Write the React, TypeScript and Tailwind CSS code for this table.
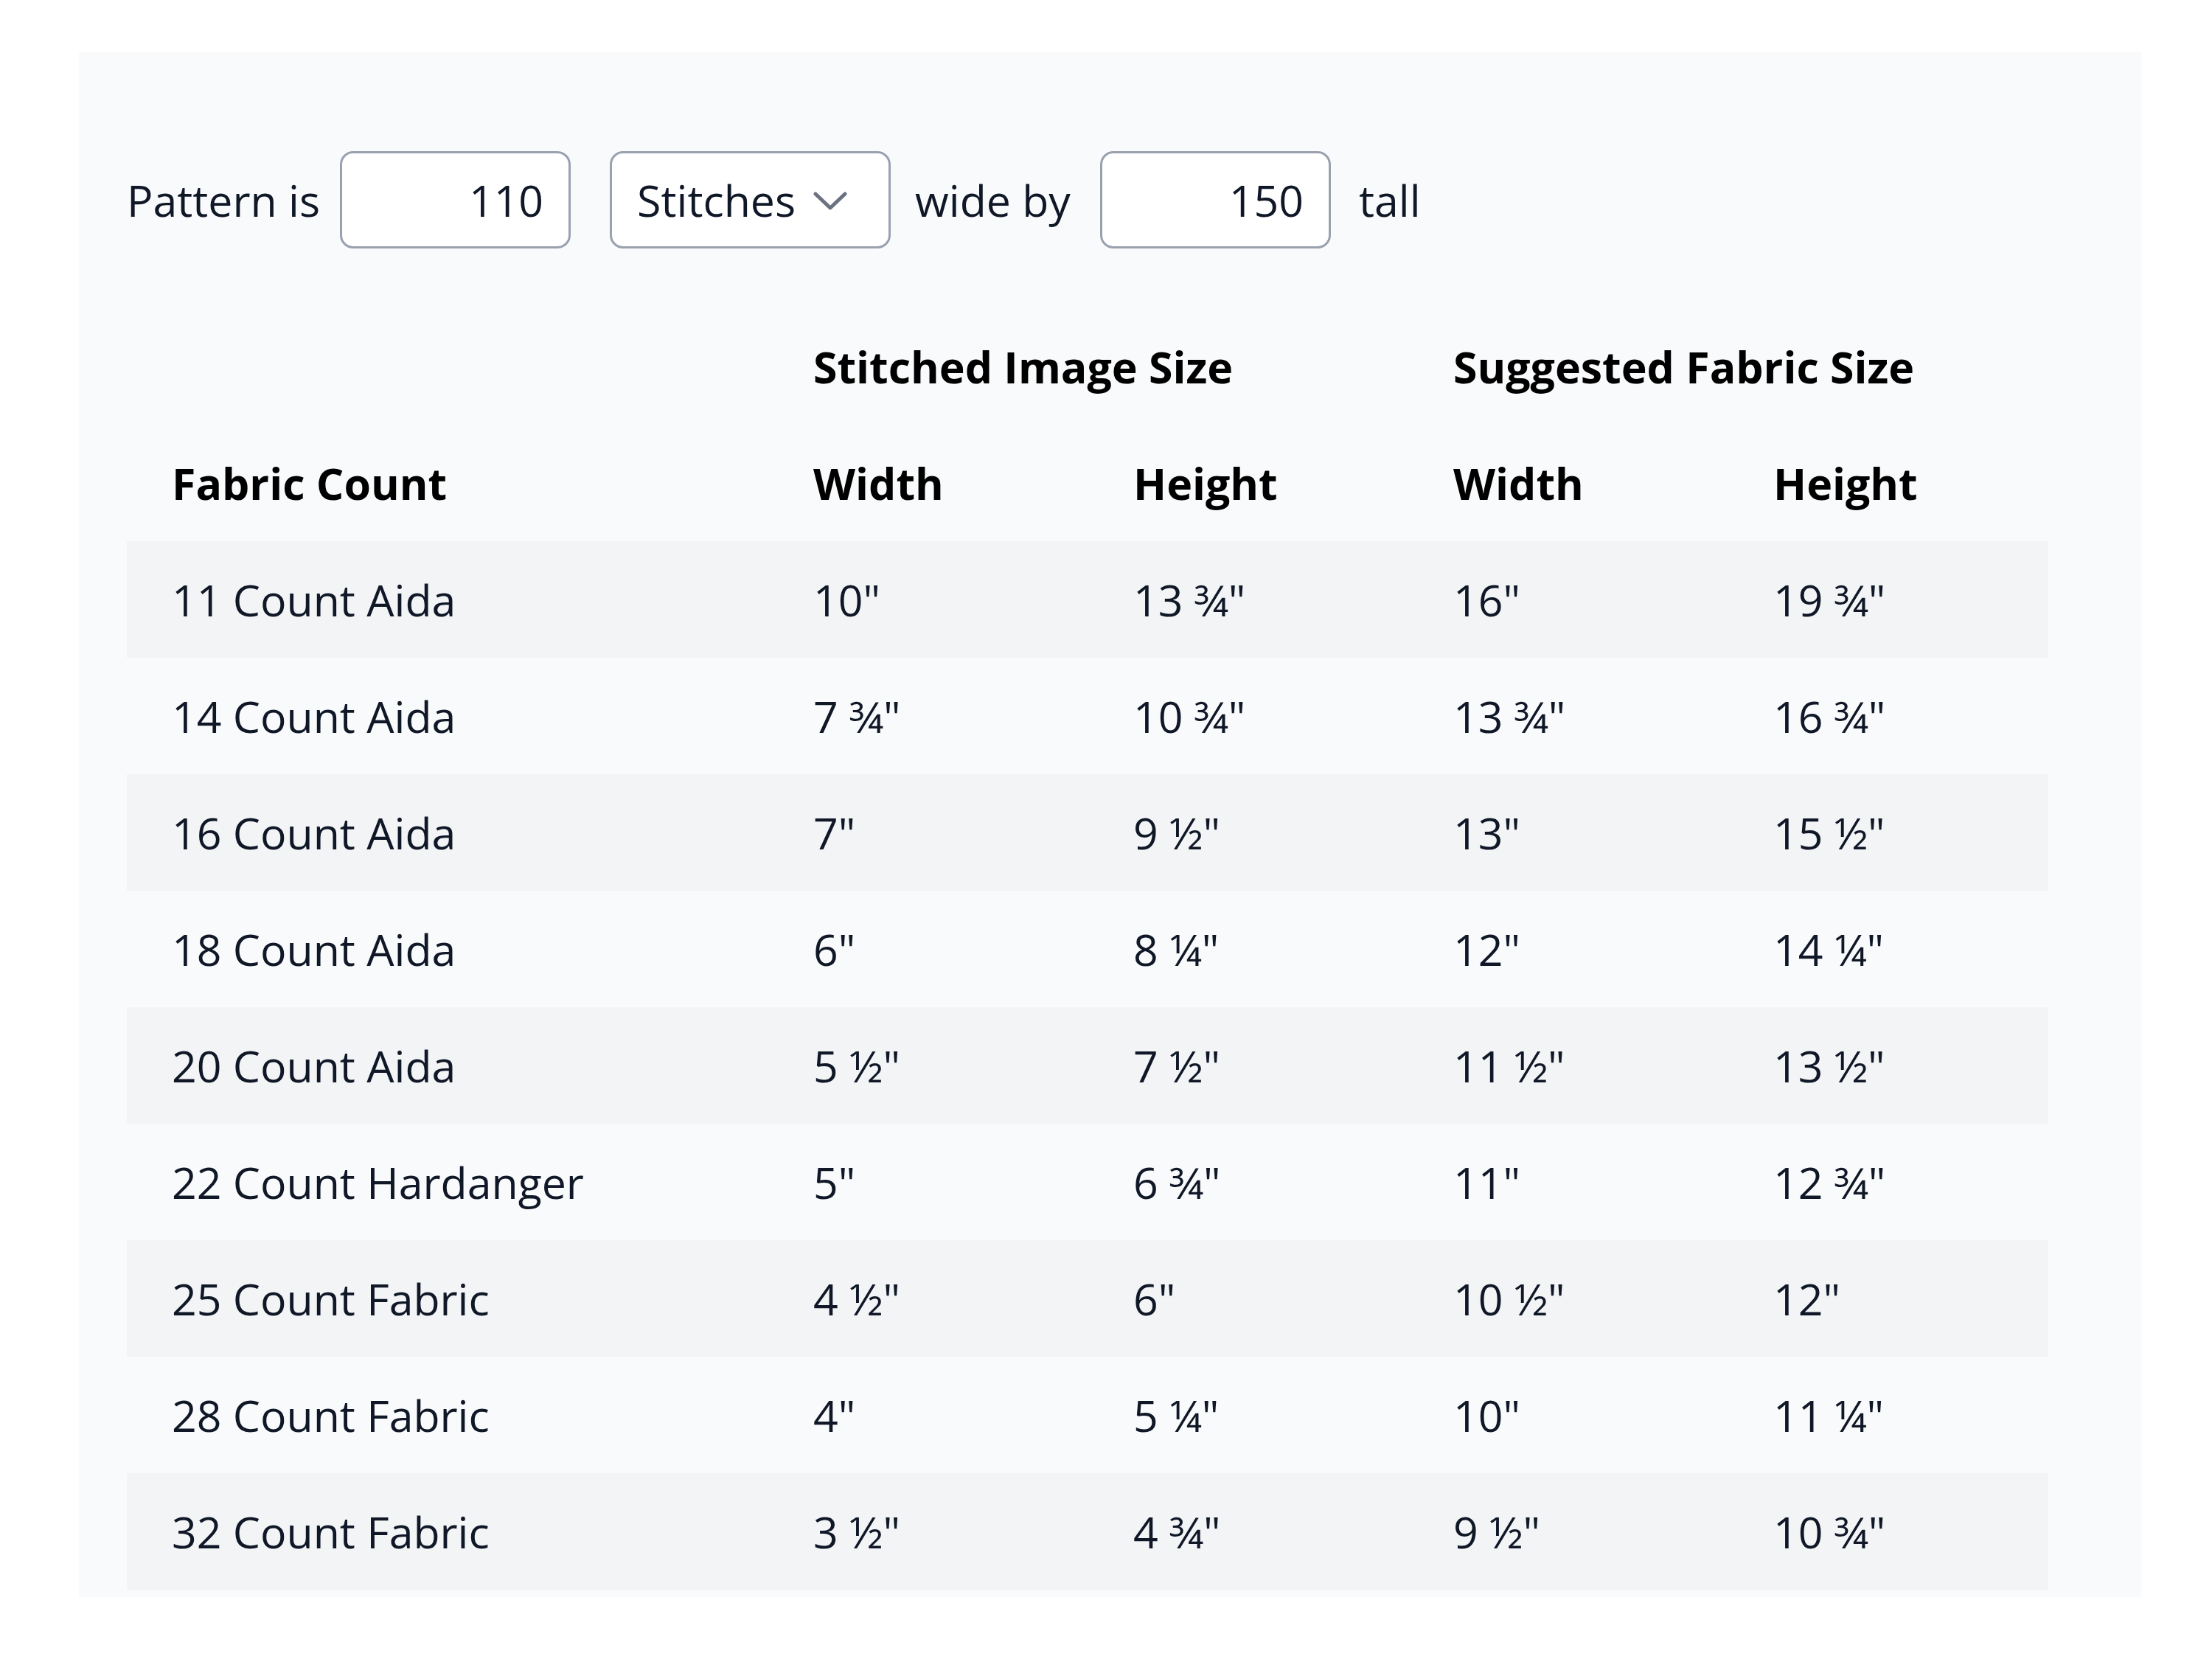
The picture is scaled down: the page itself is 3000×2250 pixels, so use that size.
type Row = [string, string, string, string, string];

const ROWS: Row[] = [
  ['11 Count Aida', '10"', '13 ¾"', '16"', '19 ¾"'],
  ['14 Count Aida', '7 ¾"', '10 ¾"', '13 ¾"', '16 ¾"'],
  ['16 Count Aida', '7"', '9 ½"', '13"', '15 ½"'],
  ['18 Count Aida', '6"', '8 ¼"', '12"', '14 ¼"'],
  ['20 Count Aida', '5 ½"', '7 ½"', '11 ½"', '13 ½"'],
  ['22 Count Hardanger', '5"', '6 ¾"', '11"', '12 ¾"'],
  ['25 Count Fabric', '4 ½"', '6"', '10 ½"', '12"'],
  ['28 Count Fabric', '4"', '5 ¼"', '10"', '11 ¼"'],
  ['32 Count Fabric', '3 ½"', '4 ¾"', '9 ½"', '10 ¾"'],
];

// Cross-stitch fabric calculator: the pattern size goes in, the table shows
// stitched size and suggested fabric size per fabric count.
export default function App() {
  return (
    <div className="min-h-screen bg-white pl-[107px] pt-[71px] font-['Open_Sans',sans-serif] text-gray-900">
      <div className="w-[2797px] bg-gray-50 pb-[10px] pl-[65px] pt-[134px]">
        <PatternForm />
        <SizeTable />
      </div>
    </div>
  );
}

function PatternForm() {
  return (
    <div className="flex h-[132px] items-center text-[59px] leading-none">
      <span>Pattern is</span>
      <NumberBox value="110" className="ml-[27px]" />
      <div className="ml-[53px] flex h-[132px] w-[381px] items-center justify-between rounded-[18px] border-[3px] border-gray-400 bg-white pl-[34px] pr-[56px]">
        <span>Stitches</span>
        <svg width="46" height="26" viewBox="0 0 46 26" fill="none" className="mt-[4px] text-gray-500">
          <path d="M3 3 L23 22 L43 3" stroke="currentColor" strokeWidth="5" strokeLinecap="round" strokeLinejoin="round" />
        </svg>
      </div>
      <span className="ml-[33px]">wide by</span>
      <NumberBox value="150" className="ml-[40px]" />
      <span className="ml-[38px]">tall</span>
    </div>
  );
}

function NumberBox({ value, className }: { value: string; className?: string }) {
  return (
    <input
      readOnly
      value={value}
      className={`h-[132px] w-[313px] rounded-[18px] border-[3px] border-gray-400 bg-white pr-[34px] text-right text-[59px] text-gray-900 outline-none ${className ?? ''}`}
    />
  );
}

function SizeTable() {
  return (
    <table className="mt-[81px] w-[2606px] table-fixed border-collapse text-left text-[59px]">
      <colgroup>
        <col className="w-[870px]" />
        <col className="w-[434px]" />
        <col className="w-[434px]" />
        <col className="w-[434px]" />
        <col className="w-[434px]" />
      </colgroup>
      <thead className="font-bold text-black">
        <tr className="h-[158px]">
          <th />
          <th colSpan={2} className="pl-[61px] align-middle">Stitched Image Size</th>
          <th colSpan={2} className="pl-[61px] align-middle">Suggested Fabric Size</th>
        </tr>
        <tr className="h-[158px]">
          <th className="pl-[61px]">Fabric Count</th>
          <th className="pl-[61px]">Width</th>
          <th className="pl-[61px]">Height</th>
          <th className="pl-[61px]">Width</th>
          <th className="pl-[61px]">Height</th>
        </tr>
      </thead>
      <tbody>
        {ROWS.map((row, i) => (
          <tr key={row[0]} className={i % 2 === 0 ? 'h-[158px] bg-gray-100' : 'h-[158px]'}>
            {row.map((cell, j) => (
              <td key={j} className="whitespace-nowrap pl-[61px] align-middle">
                {cell}
              </td>
            ))}
          </tr>
        ))}
      </tbody>
    </table>
  );
}
